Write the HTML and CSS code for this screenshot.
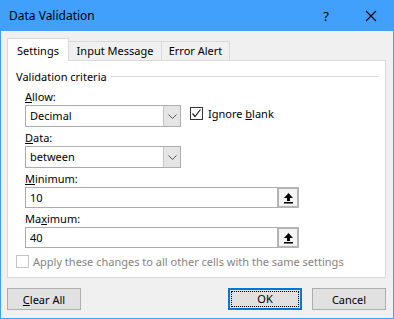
FILE: index.html
```html
<!DOCTYPE html>
<html lang="en">
<head>
    <meta charset="UTF-8">
    <title>Data Validation</title>
    <link rel="stylesheet" href="styles.css">
</head>
<body>
    <div class="window">
        <div class="titlebar">
            <div class="caption">Data Validation</div>
            <div class="help">?</div>
            <div class="close">
                <svg width="12" height="12" viewBox="0 0 12 12"><path d="M1 1 L11 11 M11 1 L1 11" stroke="#000" stroke-width="1.1" fill="none"/></svg>
            </div>
        </div>
        <div class="content">
            <div class="tabs">
                <div class="tab active">Settings</div>
                <div class="tab wide">Input Message</div>
                <div class="tab">Error Alert</div>
            </div>
            <div class="panel">
                <div class="group-title">
                    <span>Validation criteria</span>
                    <div class="rule"></div>
                </div>
                <div class="group">
                    <div class="label first"><u>A</u>llow:</div>
                    <div class="row">
                        <div class="select">
                            <span class="value">Decimal</span>
                            <span class="drop">
                                <svg width="9" height="5" viewBox="0 0 9 5"><path d="M0.5 0.5 L4.5 4.5 L8.5 0.5" stroke="#555" fill="none"/></svg>
                            </span>
                        </div>
                        <div class="check">
                            <span class="box">
                                <svg width="11" height="11" viewBox="0 0 11 11"><path d="M1.5 5.5 L4 8.5 L9.5 1.5" stroke="#222" stroke-width="1.2" fill="none"/></svg>
                            </span>
                            <span>Ignore <u>b</u>lank</span>
                        </div>
                    </div>
                    <div class="label"><u>D</u>ata:</div>
                    <div class="select">
                        <span class="value">between</span>
                        <span class="drop">
                            <svg width="9" height="5" viewBox="0 0 9 5"><path d="M0.5 0.5 L4.5 4.5 L8.5 0.5" stroke="#555" fill="none"/></svg>
                        </span>
                    </div>
                    <div class="label"><u>M</u>inimum:</div>
                    <div class="input">
                        <span class="value">10</span>
                        <span class="ref">
                            <svg width="11" height="12" viewBox="0 0 11 12"><path d="M5.5 1 L10 6 L7 6 L7 9 L4 9 L4 6 L1 6 Z" fill="#000"/><rect x="1" y="10" width="9" height="1.5" fill="#000"/></svg>
                        </span>
                    </div>
                    <div class="label">Ma<u>x</u>imum:</div>
                    <div class="input">
                        <span class="value">40</span>
                        <span class="ref">
                            <svg width="11" height="12" viewBox="0 0 11 12"><path d="M5.5 1 L10 6 L7 6 L7 9 L4 9 L4 6 L1 6 Z" fill="#000"/><rect x="1" y="10" width="9" height="1.5" fill="#000"/></svg>
                        </span>
                    </div>
                </div>
                <div class="check disabled">
                    <span class="box"></span>
                    <span>Apply these changes to all other cells with the same settings</span>
                </div>
            </div>
            <div class="buttons">
                <button class="btn"><u>C</u>lear All</button>
                <div class="spacer"></div>
                <button class="btn default"><span class="focus">OK</span></button>
                <button class="btn">Cancel</button>
            </div>
        </div>
    </div>
</body>
</html>
```

FILE: styles.css
```css
* {
    box-sizing: border-box;
}
body {
    margin: 0;
    font-family: "Noto Sans", "Open Sans", sans-serif;
    font-size: 11px;
    color: #000;
}
.window {
    width: 394px;
    height: 319px;
    border: 1px solid #42a0fd;
    border-top: 0;
    background: #f0f0f0;
    display: flex;
    flex-direction: column;
}
.titlebar {
    height: 31px;
    margin: 0 -1px;
    background: #42a0fd;
    display: flex;
    align-items: center;
}
.caption {
    flex: 1;
    padding-left: 9px;
    font-size: 12px;
}
.help {
    width: 16px;
    margin-right: 31px;
    font-size: 13px;
    text-align: center;
}
.close {
    width: 14px;
    margin-right: 15px;
    display: flex;
    align-items: center;
}
.content {
    flex: 1;
    padding: 7px 7px 0 6px;
    display: flex;
    flex-direction: column;
}
.tabs {
    display: flex;
    align-items: flex-end;
    height: 22px;
}
.tab {
    width: 68px;
    height: 19px;
    border: 1px solid #d9d9d9;
    border-bottom: 0;
    border-left: 0;
    text-align: center;
    line-height: 18px;
}
.tab.wide {
    width: 93px;
}
.tab.active {
    width: 62px;
    height: 23px;
    margin-bottom: -1px;
    border-left: 1px solid #d9d9d9;
    background: #fff;
    position: relative;
    line-height: 23px;
    z-index: 1;
}
.panel {
    height: 218px;
    background: #fff;
    border: 1px solid #d9d9d9;
    padding: 7px 6px 0 8px;
}
.group-title {
    display: flex;
    align-items: center;
    height: 16px;
}
.rule {
    flex: 1;
    height: 1px;
    background: #dcdcdc;
    margin-left: 4px;
}
.group {
    padding-left: 9px;
}
.label {
    height: 15px;
    line-height: 15px;
    margin: 3px 0 1px;
}
.label.first {
    margin-top: 5px;
}
.row {
    display: flex;
    align-items: flex-start;
}
.select {
    width: 156px;
    height: 22px;
    border: 1px solid #acacac;
    display: flex;
    align-items: stretch;
    background: #fff;
}
.value {
    flex: 1;
    padding-left: 4px;
    line-height: 20px;
}
.input .value {
    line-height: 19px;
}
.drop {
    width: 17px;
    background: #e5e5e5;
    border-left: 1px solid #c4c4c4;
    display: flex;
    align-items: center;
    justify-content: center;
}
.check {
    display: flex;
    align-items: center;
    margin-left: 9px;
    margin-top: 2px;
    line-height: 13px;
}
.box {
    width: 13px;
    height: 13px;
    border: 1px solid #333;
    background: #fff;
    margin-right: 5px;
    display: flex;
    align-items: center;
    justify-content: center;
}
.input {
    width: 274px;
    height: 21px;
    border: 1px solid #acacac;
    display: flex;
    align-items: stretch;
    background: #fff;
}
.ref {
    width: 22px;
    margin: -1px -1px -1px 0;
    border: 2px solid #b4b4b4;
    background: #f4f4f4;
    display: flex;
    align-items: center;
    justify-content: center;
}
.check.disabled {
    margin-left: 0;
    margin-top: 7px;
    color: #838383;
}
.check.disabled .box {
    border-color: #c5c5c5;
    margin-right: 4px;
}
.buttons {
    display: flex;
    margin-top: 10px;
}
.spacer {
    flex: 1;
}
.btn {
    width: 74px;
    height: 22px;
    border: 1px solid #adadad;
    background: #e1e1e1;
    font-family: inherit;
    font-size: 11px;
    color: #000;
    padding: 0;
    margin-left: 10px;
}
.btn:first-child {
    margin-left: 0;
}
.btn.default {
    border: 2px solid #0078d7;
    padding: 1px;
}
.focus {
    display: block;
    height: 100%;
    border: 1px dotted #000;
    line-height: 14px;
}
```
